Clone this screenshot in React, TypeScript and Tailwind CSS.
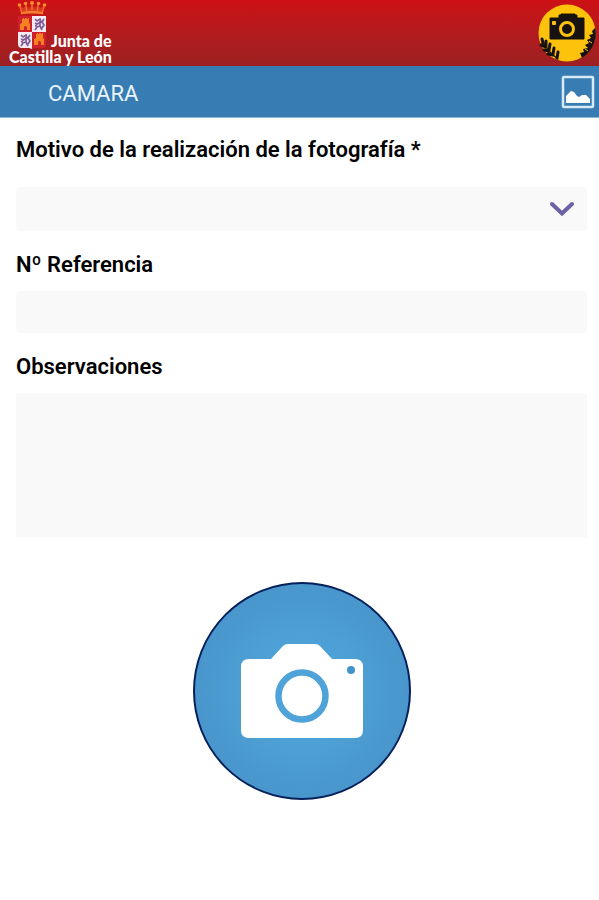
import { useState } from "react";

const Shield = () => {
  return (
    <svg width="30" height="48" viewBox="0 0 30 48" aria-hidden="true">
      {/* crown */}
      <path d="M3 5 Q8 9 9 4 Q12 9 15 4 Q18 9 21 4 Q22 9 27 5 L26 13 H4 Z" fill="#d93a22" />
      <path d="M4 11 Q15 8.500 26 11 V13.500 Q15 11 4 13.500 Z" fill="#f47b2c" />
      <g fill="none" stroke="#f0702a" strokeWidth="1.4">
        <path d="M4.500 11 L2.500 4 M9.500 10 L9 4 M15 9 V3 M20.500 10 L21 4 M25.500 11 L27.500 4" />
      </g>
      <g fill="#f58a2e">
        <circle cx="2.500" cy="4" r="1.800" />
        <circle cx="8.500" cy="2.500" r="1.800" />
        <circle cx="15" cy="2" r="2" />
        <circle cx="21.500" cy="2.500" r="1.800" />
        <circle cx="27.500" cy="4" r="1.800" />
      </g>
      {/* quarters */}
      <path d="M1 15 H29 V43 Q29 47 25 47 H18 L15 48 L12 47 H5 Q1 47 1 43 Z" fill="#d0202e" />
      <path d="M15 15 H29 V31 H15 Z" fill="#f4eaf0" />
      <path d="M1 31 H15 V48 L12 47 H5 Q1 47 1 43 Z" fill="#f4eaf0" />
      <g fill="#f58220">
        <path id="castle" d="M5 18 H6 V17 H7 V18 H8 V17 H10 V18 H11 V17 H12 V22 L13 23 V29 H10 V26 Q8 24 7 26 V29 H3 V23 L5 22 Z" />
        <use href="#castle" x="14" y="15" />
      </g>
      <g fill="none" stroke="#7d5c98" strokeWidth="1.700">
        <path id="lion" d="M18 18 L20 20 L23 18 L24 21 L20 23 L18 22 M23 20 V25 L20 26 L18 29 M23 25 L25 29 M20 24 L18 25 M25 27 L27 24 L25 21 L27 18" />
        <use href="#lion" x="-14" y="16" />
      </g>
    </svg>
  );
};

const Logo = () => {
  return (
    <div className="pl-[9px] pt-px text-white font-black text-[16px] font-[Lato,sans-serif]">
      <div className="flex items-end gap-1 pl-2">
        <Shield />
        <span className="leading-4">Junta de</span>
      </div>
      <div className="leading-4">Castilla y León</div>
    </div>
  );
};

const AppBadge = () => {
  return (
    <svg className="mr-[3px]" width="58" height="58" viewBox="0 0 58 58" aria-hidden="true">
      <circle cx="29" cy="29" r="28.5" fill="#fdc20c" />
      <path d="M14 14 H21 V11 H23 V10 H37 V11 H39 V14 H46 V35 H12 V14 Z" fill="#17120f" stroke="#17120f" strokeLinejoin="round" />
      <circle cx="29" cy="25" r="6.5" fill="none" stroke="#fdc20c" strokeWidth="3" />
      <rect x="14" y="17" width="4" height="4" rx="1" fill="#fdc20c" />
      {/* wheat ear */}
      <g stroke="#17120f" strokeWidth="3" strokeLinecap="round" fill="none">
        <path d="M5 38 Q10 48 20 55" strokeWidth="1.2" />
        <path d="M4 35 L5 39 M8 37 L8 42 M3 41 L8 43 M12 40 L11 46 M6 46 L11 47 M16 44 L15 50 M10 50 L15 51 M20 48 L19 54" />
      </g>
      {/* foliage */}
      <path d="M57 24 L54 27 L55 30 L51 31 L53 34 L49 36 L51 39 L47 41 L50 44 L45 45 L46 48 L42 49 L44 54 Q53 48 56 39 Q59 31 57 24 Z" fill="#17120f" />
      <path d="M47 45 L50 47 M51 37 L54 39" stroke="#fdc20c" />
    </svg>
  );
};

const GalleryIcon = () => {
  return (
    <svg width="34" height="34" viewBox="0 0 34 34" aria-hidden="true">
      <rect x="2" y="2" width="30" height="30" rx="1" fill="none" stroke="#d9eaf7" strokeWidth="2.500" />
      <path d="M5 28 V21 L8 18 L10 16 L13 17 L16 21 L18 22 L21 20 L25 20 L29 24 V28 Z" fill="#fff" />
    </svg>
  );
};

const CameraIcon = () => {
  return (
    <svg width="122" height="94" viewBox="0 0 122 94" aria-hidden="true">
      <path d="M8 15 H30 L42 2 Q44 0 47 0 H74 Q77 0 79 2 L91 15 H114 Q122 15 122 23 V86 Q122 94 114 94 H8 Q0 94 0 86 V23 Q0 15 8 15 Z" fill="#fff" />
      <circle cx="61" cy="52" r="23.5" fill="none" stroke="#4fa3d8" strokeWidth="6.5" />
      <circle cx="110" cy="26" r="4" fill="#4293ca" />
    </svg>
  );
};

const labelClass = "block text-[22px] leading-7 font-semibold text-black";
const fieldClass = "block w-full bg-[#f9f9f9] px-3 text-xl outline-none";

export default function App() {
  const [motivo, setMotivo] = useState("");

  return (
    <div className="min-h-screen bg-white font-[Roboto,sans-serif]">
      <header className="h-[66px] flex items-start justify-between bg-linear-to-b from-[#cd1015] to-[#9b2022]">
        <Logo />
        <div className="pt-1">
          <AppBadge />
        </div>
      </header>

      <div className="h-[52px] flex items-center justify-between pl-12 pr-1 bg-[#377cb3] border-b border-[#8db6d6]">
        <h1 className="pt-1 text-[22px] leading-7 text-[#eaf4fc]">CAMARA</h1>
        <button type="button" aria-label="Galería">
          <GalleryIcon />
        </button>
      </div>

      <form className="px-4 pr-3 pt-[18px]" onSubmit={(e) => e.preventDefault()}>
        <label htmlFor="motivo" className={labelClass}>
          Motivo de la realización de la fotografía *
        </label>
        <div className="relative mt-[23px]">
          <select
            id="motivo"
            value={motivo}
            onChange={(e) => setMotivo(e.target.value)}
            className={`${fieldClass} h-11 appearance-none rounded-sm`}
          >
            <option value=""></option>
          </select>
          <svg
            className="absolute right-3 top-3.5 pointer-events-none"
            width="26"
            height="16"
            viewBox="0 0 26 16"
            aria-hidden="true"
          >
            <path d="M3 3 L13 12.500 L23 3" fill="none" stroke="#6b63a6" strokeWidth="4" strokeLinecap="round" />
          </svg>
        </div>

        <label htmlFor="referencia" className={`${labelClass} mt-5`}>
          Nº Referencia
        </label>
        <input id="referencia" type="text" className={`${fieldClass} mt-3 h-[42px] rounded-sm`} />

        <label htmlFor="observaciones" className={`${labelClass} mt-5`}>
          Observaciones
        </label>
        <textarea id="observaciones" className={`${fieldClass} mt-3 h-36 resize-none`} />

        <div className="flex justify-center pt-[45px] pb-8">
          <button
            type="button"
            aria-label="Hacer fotografía"
            className="size-[218px] rounded-full border-2 border-[#06205c] flex items-center justify-center bg-radial from-[#52aadf] to-[#4895ca] to-75%"
          >
            <CameraIcon />
          </button>
        </div>
      </form>
    </div>
  );
}
